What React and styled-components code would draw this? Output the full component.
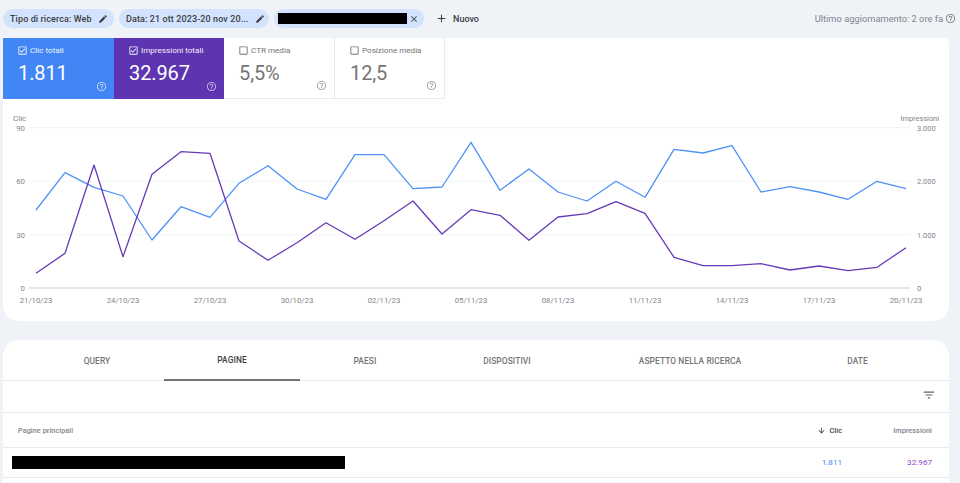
import React from "react";
import styled, { createGlobalStyle } from "styled-components";

const Global = createGlobalStyle`
  html, body { margin: 0; padding: 0; background: #eff3f8; }
  body { font-family: Roboto, "Liberation Sans", sans-serif; height: 483px; overflow: hidden; }
`;

const Page = styled.div`
  width: 960px;
  height: 483px;
  overflow: hidden;
  padding: 0 11px 0 3px;
  box-sizing: border-box;
  display: flex;
  flex-direction: column;
`;

const Toolbar = styled.div`
  height: 38px;
  flex: none;
  display: flex;
  align-items: center;
  padding-bottom: 1px;
  box-sizing: border-box;
  margin-right: -9px;
`;

const Chip = styled.div`
  width: ${(p) => p.$w}px;
  height: 19px;
  margin-right: 5px;
  border-radius: 10px;
  background: #d3e3fd;
  color: #3c4043;
  font-size: 9px;
  font-weight: 500;
  letter-spacing: 0.1px;
  display: flex;
  align-items: center;
  justify-content: space-between;
  padding: 0 ${(p) => p.$pr}px 0 ${(p) => p.$pl}px;
  box-sizing: border-box;
  white-space: nowrap;
`;

const Redacted = styled.div`
  background: #000;
  width: ${(p) => p.$w}px;
  height: ${(p) => p.$h}px;
`;

const AddButton = styled.div`
  display: flex;
  align-items: center;
  gap: 5px;
  margin-left: 6px;
  font-size: 9px;
  font-weight: 500;
  color: #3c4043;
`;

const Updated = styled.div`
  margin-left: auto;
  display: flex;
  align-items: center;
  gap: 2px;
  font-size: 9.3px;
  color: #80868b;
  padding-right: 2px;
`;

const Icon = styled.svg`
  display: block;
  flex: none;
  fill: currentColor;
`;

const ChartCard = styled.section`
  flex: none;
  height: 283px;
  background: #fff;
  border-radius: 0 5px 16px 16px;
`;

const Tiles = styled.div`
  display: flex;
  height: 61px;
`;

const Tile = styled.div`
  position: relative;
  width: ${(p) => p.$w}px;
  box-sizing: border-box;
  background: ${(p) => p.$bg || "#fff"};
  color: ${(p) => (p.$bg ? "#fff" : "#757575")};
  border-right: ${(p) => (p.$bg ? "none" : "1px solid #e8eaed")};
  border-bottom: ${(p) => (p.$bg ? "none" : "1px solid #e8eaed")};
  padding: 6.5px 0 0 14px;
`;

const TileLabel = styled.div`
  display: flex;
  align-items: center;
  gap: 2px;
  font-size: 8.1px;
  height: 11px;
  opacity: ${(p) => (p.$on ? 0.92 : 1)};
`;

const TileValue = styled.div`
  font-size: 20px;
  line-height: 24px;
  margin-top: 5px;
  letter-spacing: -0.1px;
  padding-left: 1px;
`;

const TileHelp = styled.div`
  position: absolute;
  right: 7px;
  bottom: 7px;
  opacity: 0.65;
`;

const Chart = styled.svg`
  display: block;
  width: 946px;
  height: 222px;
`;

const TableCard = styled.section`
  flex: none;
  margin-top: 19px;
  background: #fff;
  border-radius: 16px 16px 0 0;
  height: 160px;
`;

const TabRow = styled.div`
  display: grid;
  grid-template-columns: 134px 136px 130px 154px 212px 123px;
  padding-left: 27px;
  height: 40px;
  border-bottom: 1px solid #e8eaed;
`;

const Tab = styled.div`
  display: flex;
  align-items: center;
  justify-content: center;
  height: 40px;
  padding-top: 1px;
  box-sizing: border-box;
  font-size: 8.4px;
  font-weight: 500;
  letter-spacing: 0.1px;
  color: ${(p) => (p.$active ? "#3c4043" : "#757575")};
  border-bottom: ${(p) => (p.$active ? "1px solid #757575" : "none")};
  box-shadow: ${(p) => (p.$active ? "0 1px 0 #757575" : "none")};
`;

const FilterRow = styled.div`
  height: 32px;
  border-bottom: 1px solid #e8eaed;
  display: flex;
  align-items: center;
  justify-content: flex-end;
  padding: 0 13px 4px 0;
  box-sizing: border-box;
  color: #5f6368;
`;

const HeaderRow = styled.div`
  height: 34px;
  border-bottom: 1px solid #e8eaed;
  display: grid;
  grid-template-columns: 1fr 110px 90px;
  align-items: center;
  padding: 0 17px 0 15px;
  font-size: 7.4px;
  font-weight: 500;
  color: #80868b;
`;

const HeadRight = styled.div`
  display: flex;
  align-items: center;
  justify-content: flex-end;
  gap: 4px;
  color: ${(p) => (p.$active ? "#3c4043" : "#80868b")};
`;

const DataRow = styled.div`
  height: 29px;
  border-bottom: 1px solid #e8eaed;
  display: grid;
  grid-template-columns: 1fr 110px 90px;
  align-items: center;
  padding: 0 17px 0 9px;
  font-size: 8.1px;
`;

const Cell = styled.div`
  text-align: right;
  padding-bottom: 2px;
  color: ${(p) => p.$color};
`;

const P = {
  pencil: "M3 17.25V21h3.75L17.81 9.94l-3.75-3.75L3 17.25zM20.71 7.04c.39-.39.39-1.02 0-1.41l-2.34-2.34c-.39-.39-1.02-.39-1.41 0l-1.83 1.83 3.75 3.75 1.83-1.83z",
  close: "M19 6.41 17.59 5 12 10.59 6.41 5 5 6.41 10.59 12 5 17.59 6.41 19 12 13.41 17.59 19 19 17.59 13.41 12z",
  plus: "M19 13h-6v6h-2v-6H5v-2h6V5h2v6h6v2z",
  help: "M11 18h2v-2h-2v2zm1-16C6.48 2 2 6.48 2 12s4.48 10 10 10 10-4.48 10-10S17.52 2 12 2zm0 18c-4.41 0-8-3.59-8-8s3.59-8 8-8 8 3.59 8 8-3.59 8-8 8zm0-14c-2.21 0-4 1.79-4 4h2c0-1.1.9-2 2-2s2 .9 2 2c0 2-3 1.75-3 5h2c0-2.25 3-2.5 3-5 0-2.21-1.79-4-4-4z",
  filter: "M10 18h4v-2h-4v2zM3 6v2h18V6H3zm3 7h12v-2H6v2z",
  down: "M20 12l-1.41-1.41L13 16.17V4h-2v12.17l-5.58-5.59L4 12l8 8 8-8z",
  checked: "M19 3H5c-1.1 0-2 .9-2 2v14c0 1.1.9 2 2 2h14c1.1 0 2-.9 2-2V5c0-1.1-.9-2-2-2zm0 16H5V5h14v14zM17.99 9l-1.41-1.42-6.59 6.54-2.58-2.6-1.42 1.41 4 4z",
  blank: "M19 5v14H5V5h14m0-2H5c-1.1 0-2 .9-2 2v14c0 1.1.9 2 2 2h14c1.1 0 2-.9 2-2V5c0-1.1-.9-2-2-2z",
};

const Ic = ({ d, s = 12 }) => (
  <Icon width={s} height={s} viewBox="0 0 24 24"><path d={d} /></Icon>
);

const blue = [300,188,232,258,390,290,322,220,167,237,268,134,134,236,231,97,241,177,246,273,214,262,118,129,107,246,230,246,268,214,236];
const purple = [490,430,165,440,193,125,130,393,451,398,338,388,332,273,372,299,316,391,321,311,275,310,442,467,467,461,480,468,482,472,413];
const pts = (a) => a.map((y, i) => `${36 + i * 29},${(y / 3 + 110).toFixed(1)}`).join(" ");

const gridY = [{ y: 127.7, l: "90", r: "3.000" }, { y: 181.3, l: "60", r: "2.000" }, { y: 234.7, l: "30", r: "1.000" }];
const dates = [["21/10/23", 36], ["24/10/23", 123], ["27/10/23", 210], ["30/10/23", 297], ["02/11/23", 384], ["05/11/23", 471], ["08/11/23", 558], ["11/11/23", 645], ["14/11/23", 732], ["17/11/23", 819], ["20/11/23", 906]];

const tiles = [
  { w: 111, bg: "#4285f4", label: "Clic totali", v: "1.811" },
  { w: 110, bg: "#5e35b1", label: "Impressioni totali", v: "32.967" },
  { w: 111, label: "CTR media", v: "5,5%" },
  { w: 110, label: "Posizione media", v: "12,5" },
];

export default function App() {
  return (
    <Page>
      <Global />
      <Toolbar>
        <Chip $w={111} $pl={7} $pr={6}>Tipo di ricerca: Web<Ic d={P.pencil} s={10} /></Chip>
        <Chip $w={150} $pl={7} $pr={4}>Data: 21 ott 2023-20 nov 20...<Ic d={P.pencil} s={10} /></Chip>
        <Chip $w={150} $pl={4} $pr={5}><Redacted $w={129} $h={11} /><Ic d={P.close} s={10} /></Chip>
        <AddButton><Ic d={P.plus} s={13} />Nuovo</AddButton>
        <Updated>Ultimo aggiornamento: 2 ore fa<Ic d={P.help} s={11} /></Updated>
      </Toolbar>
      <ChartCard>
        <Tiles>
          {tiles.map((t) => (
            <Tile key={t.label} $w={t.w} $bg={t.bg}>
              <TileLabel $on={!!t.bg}><Ic d={t.bg ? P.checked : P.blank} s={11} />{t.label}</TileLabel>
              <TileValue>{t.v}</TileValue>
              <TileHelp><Ic d={P.help} s={11} /></TileHelp>
            </Tile>
          ))}
        </Tiles>
        <Chart viewBox="3 99 946 222">
          <g fontFamily="Roboto, sans-serif" fontSize="7.8" fill="#80868b">
            {gridY.map((g) => (
              <g key={g.l}>
                <line x1="29" x2="910" y1={g.y} y2={g.y} stroke="#f1f3f4" />
                <text x="25" y={g.y + 3} textAnchor="end">{g.l}</text>
                <text x="917" y={g.y + 3} fontSize="7.4">{g.r}</text>
              </g>
            ))}
            <line x1="29" x2="910" y1="288" y2="288" stroke="#cfd1d4" strokeWidth="1" />
            <text x="25" y="291" textAnchor="end">0</text>
            <text x="917" y="291">0</text>
            <text x="13" y="120.5" fontSize="8">Clic</text>
            <text x="939" y="120.5" textAnchor="end" fontSize="7.4">Impressioni</text>
            {dates.map(([d, x]) => (
              <text key={d} x={x} y="303" textAnchor="middle" fontSize="7.8">{d}</text>
            ))}
          </g>
          <polyline points={pts(blue)} fill="none" stroke="#4f91f7" strokeWidth="1.3" strokeLinejoin="round" />
          <polyline points={pts(purple)} fill="none" stroke="#673ab7" strokeWidth="1.3" strokeLinejoin="round" />
        </Chart>
      </ChartCard>
      <TableCard>
        <TabRow>
          {["QUERY", "PAGINE", "PAESI", "DISPOSITIVI", "ASPETTO NELLA RICERCA", "DATE"].map((t) => (
            <Tab key={t} $active={t === "PAGINE"}>{t}</Tab>
          ))}
        </TabRow>
        <FilterRow><Ic d={P.filter} s={14} /></FilterRow>
        <HeaderRow>
          <div>Pagine principali</div>
          <HeadRight $active><Ic d={P.down} s={9} />Clic</HeadRight>
          <HeadRight>Impressioni</HeadRight>
        </HeaderRow>
        <DataRow>
          <Redacted $w={333} $h={13} />
          <Cell $color="#4285f4">1.811</Cell>
          <Cell $color="#8e44c4">32.967</Cell>
        </DataRow>
      </TableCard>
    </Page>
  );
}
